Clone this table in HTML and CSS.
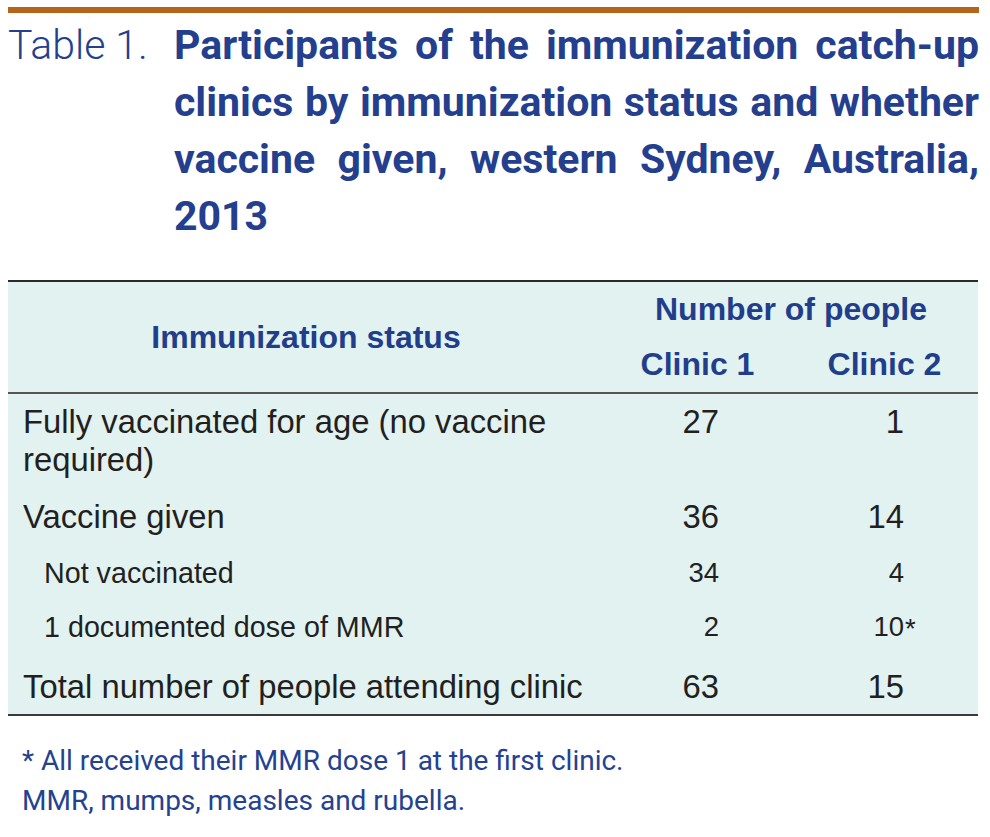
FILE: index.html
```html
<!DOCTYPE html>
<html lang="en">
<head>
<meta charset="utf-8">
<title>Table 1</title>
<link rel="stylesheet" href="styles.css">
</head>
<body>
<div class="page">
  <div class="rule"></div>
  <div class="title">
    <div class="label">Table 1.</div>
    <div class="heading">
      <span class="line">Participants of the immunization catch-up</span>
      <span class="line">clinics by immunization status and whether</span>
      <span class="line">vaccine given, western Sydney, Australia,</span>
      <span class="line last">2013</span>
    </div>
  </div>
  <table class="data">
    <colgroup>
      <col class="c-status">
      <col class="c-num">
      <col class="c-num">
    </colgroup>
    <thead>
      <tr>
        <th rowspan="2" class="status">Immunization status</th>
        <th colspan="2" class="group">Number of people</th>
      </tr>
      <tr>
        <th class="clinic">Clinic 1</th>
        <th class="clinic">Clinic 2</th>
      </tr>
    </thead>
    <tbody>
      <tr class="main">
        <td class="lab">Fully vaccinated for age (no vaccine required)</td>
        <td class="n1">27</td>
        <td class="n2">1</td>
      </tr>
      <tr class="main">
        <td class="lab">Vaccine given</td>
        <td class="n1">36</td>
        <td class="n2">14</td>
      </tr>
      <tr class="sub">
        <td class="lab">Not vaccinated</td>
        <td class="n1">34</td>
        <td class="n2">4</td>
      </tr>
      <tr class="sub sub-last">
        <td class="lab">1 documented dose of MMR</td>
        <td class="n1">2</td>
        <td class="n2"><span class="mark">10<span class="star">*</span></span></td>
      </tr>
      <tr class="total">
        <td class="lab">Total number of people attending clinic</td>
        <td class="n1">63</td>
        <td class="n2">15</td>
      </tr>
    </tbody>
  </table>
  <div class="notes">
    <p>* All received their MMR dose 1 at the first clinic.</p>
    <p>MMR, mumps, measles and rubella.</p>
  </div>
</div>
</body>
</html>
```

FILE: styles.css
```css
html, body {
  margin: 0;
  padding: 0;
  background: #ffffff;
}

.page {
  padding: 7px 0 0 8px;
  width: 971px;
}

.rule {
  height: 6px;
  background: #b5641b;
  width: 971px;
}

.title {
  display: flex;
  margin-top: 4px;
  color: #233f8e;
  font-family: Roboto, "Liberation Sans", sans-serif;
  font-size: 41px;
  line-height: 57px;
}

.label {
  flex: none;
  width: 166px;
  font-weight: 300;
}

.heading {
  flex: 1;
  font-weight: 700;
  width: 804px;
}

.line {
  display: block;
  text-align: justify;
  text-align-last: justify;
}

.line.last {
  text-align-last: left;
}

.data {
  margin-top: 35px;
  width: 970px;
  table-layout: fixed;
  border-collapse: separate;
  border-spacing: 0;
  background: #e1f2f1;
  border-top: 2px solid #2a2a2a;
  border-bottom: 2px solid #3a3a3a;
  font-family: "Liberation Sans", Arial, sans-serif;
}

.c-status {
  width: 596px;
}

.c-num {
  width: 187px;
}

.data th {
  color: #213e8b;
  font-weight: 700;
  font-size: 32px;
  line-height: 37px;
  height: 55px;
  padding: 0;
  text-align: center;
  vertical-align: middle;
}

.data th.status,
.data th.clinic {
  border-bottom: 2px solid #555555;
}

.data td {
  color: #231f20;
  font-size: 32.8px;
  line-height: 38px;
  padding: 9px 0 10px;
  vertical-align: top;
}

.data td.lab {
  padding-left: 15px;
  padding-right: 0;
}

.data tr.total td.lab {
  white-space: nowrap;
}

.data td.n1 {
  text-align: right;
  padding-right: 72px;
}

.data td.n2 {
  text-align: right;
  padding-right: 74px;
}

.data tr.sub td {
  font-size: 28.7px;
  padding-top: 8px;
  padding-bottom: 8px;
}

.data tr.sub-last td {
  padding-bottom: 10px;
}

.data tr.sub td.lab {
  padding-left: 36px;
}

.data tr.sub td.n1,
.data tr.sub td.n2 {
  font-size: 27.5px;
}

.data tr.total td {
  padding-top: 12px;
  padding-bottom: 8px;
}

.mark {
  position: relative;
}

.star {
  position: absolute;
  left: 100%;
  top: -1px;
  margin-left: 1px;
}

.notes {
  margin-top: 25px;
  padding-left: 14px;
  font-family: Roboto, "Liberation Sans", sans-serif;
  font-size: 28px;
  line-height: 40px;
  color: #24428f;
}

.notes p {
  margin: 0;
}
```
